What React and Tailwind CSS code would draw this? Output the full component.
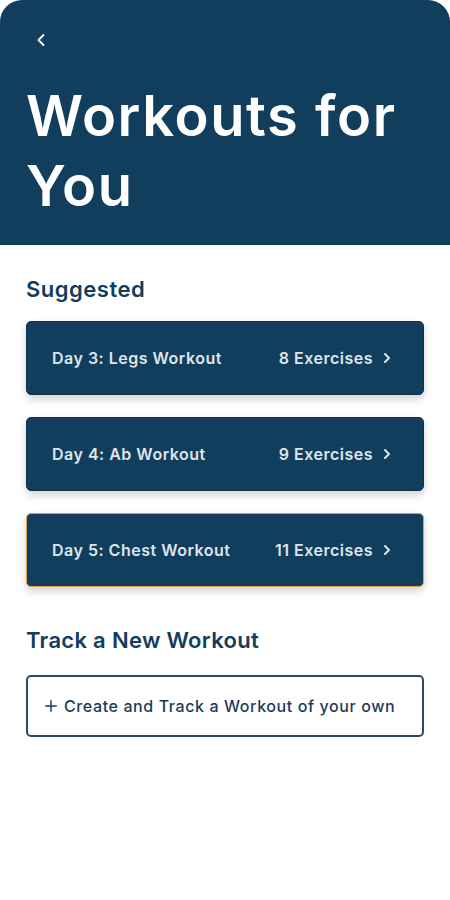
import { ChevronLeft, ChevronRight, Plus } from "lucide-react";

const workouts = [
  { title: "Day 3: Legs Workout", count: "8 Exercises" },
  { title: "Day 4: Ab Workout", count: "9 Exercises" },
  { title: "Day 5: Chest Workout", count: "11 Exercises", focused: true },
];

export default function App() {
  return (
    <div className="min-h-[900px] w-[450px] bg-white font-['Inter',sans-serif]">
      {/* header */}
      <header className="h-[245px] rounded-t-[22px] bg-[#123e5e] px-[26px] pt-[30px] text-white">
        <ChevronLeft size={20} strokeWidth={2.2} className="ml-[5px] text-white" />
        <h1 className="mt-[31px] text-[56px] leading-[70px] font-semibold tracking-[1.6px]">
          Workouts for You
        </h1>
      </header>

      <main className="px-[26px]">
        <h2 className="mt-[29px] text-[22px] leading-[30px] font-semibold tracking-[0.5px] text-[#133d5d]">Suggested</h2>
        <div className="mt-[17px] flex flex-col gap-[22px]">
          {workouts.map((w) => (
            <div
              key={w.title}
              className={
                "flex h-[74px] items-center justify-between rounded-[5px] bg-[#123e5e] pl-[25px] pr-[28px] text-[16px] font-semibold tracking-[0.5px] text-[#dfe4ea] shadow-[0_4px_8px_rgba(0,0,0,0.18)] " +
                (w.focused ? "border border-[#d9a24a]" : "border border-[#0e3350]")
              }
            >
              <span>{w.title}</span>
              <span className="flex items-center gap-[6px]">
                {w.count}
                <ChevronRight size={16} strokeWidth={3} />
              </span>
            </div>
          ))}
        </div>

        <h2 className="mt-[38px] text-[22px] leading-[30px] font-semibold tracking-[0.3px] text-[#133d5d]">Track a New Workout</h2>
        <button className="mt-[20px] flex h-[62px] w-full items-center gap-[4px] rounded-[5px] border-2 border-[#2b4a66] pl-[14px] text-[16px] font-medium tracking-[0.6px] text-[#1d3a57]">
          <Plus size={18} strokeWidth={2} />
          Create and Track a Workout of your own
        </button>
      </main>
    </div>
  );
}
